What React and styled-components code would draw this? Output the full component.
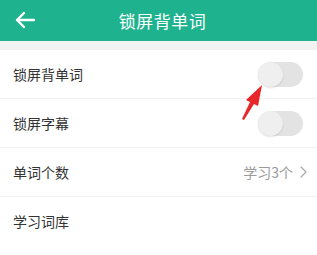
import React from "react";
import styled, { createGlobalStyle } from "styled-components";

const Global = createGlobalStyle`
  html, body { margin: 0; padding: 0; background: #fff; }
  body { font-family: "Noto Sans CJK SC", "Noto Sans", sans-serif; }
`;

const Page = styled.div`
  width: 317px;
  height: 255px;
  position: relative;
  overflow: hidden;
  background: #fff;
`;

const Header = styled.div`
  height: 41px;
  background: #1fb28f;
  display: flex;
  align-items: center;
  justify-content: center;
  position: relative;
  color: #fff;
`;

const Title = styled.div`
  font-size: 17px;
  line-height: 1;
  letter-spacing: 0.5px;
  margin-left: 8px;
`;

const Back = styled.div`
  position: absolute;
  left: 14px;
  top: 9px;
  width: 22px;
  height: 22px;
  display: flex;
`;

const Gap = styled.div`
  height: 9px;
  background: #f2f3f3;
`;

const List = styled.div`
  display: flex;
  flex-direction: column;
`;

const Row = styled.div`
  height: 48px;
  display: flex;
  align-items: center;
  justify-content: space-between;
  padding: 0 ${(p) => (p.$link ? "10px" : "13px")} 0 13px;
  border-bottom: ${(p) => (p.$last ? "none" : "1px solid #f1f1f1")};
`;

const Label = styled.div`
  font-size: 14px;
  color: #333;
`;

const Track = styled.div`
  width: 45px;
  height: 25px;
  border-radius: 13px;
  background: #e3e3e3;
  position: relative;
  margin-right: 1px;
`;

const Thumb = styled.div`
  position: absolute;
  left: 0;
  top: 0;
  width: 25px;
  height: 25px;
  border-radius: 50%;
  background: #efefef;
  box-shadow: 0 1px 2px rgba(0, 0, 0, 0.12);
`;

const Value = styled.div`
  display: flex;
  align-items: center;
  gap: 7px;
  font-size: 14px;
  color: #9a9a9a;
`;

const Arrow = styled.svg`
  position: absolute;
  left: 236px;
  top: 82px;
`;

const Switch = () => (
  <Track>
    <Thumb />
  </Track>
);

export default function App() {
  return (
    <Page>
      <Global />
      <Header>
        <Back>
          <svg width="22" height="22" viewBox="0 0 22 22" fill="none">
            <path d="M20 11H3M10 4L3 11l7 7" stroke="#fff" strokeWidth="2.4" strokeLinecap="round" strokeLinejoin="round" />
          </svg>
        </Back>
        <Title>锁屏背单词</Title>
      </Header>
      <Gap />
      <List>
        <Row>
          <Label>锁屏背单词</Label>
          <Switch />
        </Row>
        <Row>
          <Label>锁屏字幕</Label>
          <Switch />
        </Row>
        <Row $link>
          <Label>单词个数</Label>
          <Value>
            学习3个
            <svg width="7" height="12" viewBox="0 0 7 12" fill="none">
              <path d="M1 1l5 5-5 5" stroke="#aaa" strokeWidth="1.3" strokeLinecap="round" strokeLinejoin="round" />
            </svg>
          </Value>
        </Row>
        <Row $last>
          <Label>学习词库</Label>
        </Row>
      </List>
      <Arrow width="30" height="40" viewBox="0 0 30 40">
        <path d="M6 37 L14 20 L10 18 L26 3 L22 24 L18 22 L8 38 Z" fill="#e8262a" />
      </Arrow>
    </Page>
  );
}
